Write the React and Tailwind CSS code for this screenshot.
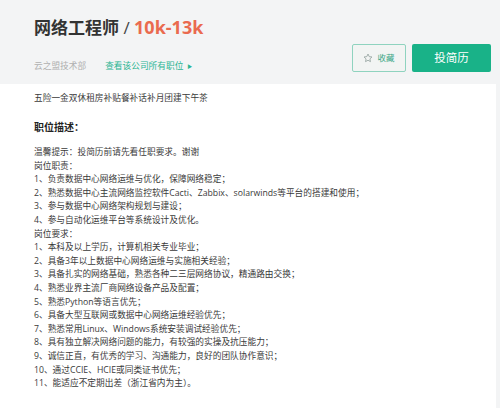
import React from 'react'

const font = { fontFamily: '"Open Sans", "Noto Sans CJK SC", sans-serif' }

const lines = [
  '温馨提示：投简历前请先看任职要求。谢谢',
  '岗位职责：',
  '1、负责数据中心网络运维与优化，保障网络稳定；',
  '2、熟悉数据中心主流网络监控软件Cacti、Zabbix、solarwinds等平台的搭建和使用；',
  '3、参与数据中心网络架构规划与建设；',
  '4、参与自动化运维平台等系统设计及优化。',
  '岗位要求：',
  '1、本科及以上学历，计算机相关专业毕业；',
  '2、具备3年以上数据中心网络运维与实施相关经验；',
  '3、具备扎实的网络基础，熟悉各种二三层网络协议，精通路由交换；',
  '4、熟悉业界主流厂商网络设备产品及配置；',
  '5、熟悉Python等语言优先；',
  '6、具备大型互联网或数据中心网络运维经验优先；',
  '7、熟悉常用Linux、Windows系统安装调试经验优先；',
  '8、具有独立解决网络问题的能力，有较强的实操及抗压能力；',
  '9、诚信正直，有优秀的学习、沟通能力，良好的团队协作意识；',
  '10、通过CCIE、HCIE或同类证书优先；',
  '11、能适应不定期出差（浙江省内为主）。',
]

function Star() {
  return (
    <svg width="10" height="10" viewBox="0 0 24 24" fill="none" stroke="#8a9a96" strokeWidth="1.8" strokeLinejoin="round">
      <path d="M12 2.5l2.9 6.2 6.6.8-4.9 4.6 1.3 6.6L12 17.4l-5.9 3.3 1.3-6.6-4.9-4.6 6.6-.8z" />
    </svg>
  )
}

export default function App() {
  return (
    <div className="w-[500px] h-[408px] overflow-hidden bg-[#f3f4f5]" style={font}>
      {/* header */}
      <div className="h-[84px] flex justify-between pl-[34px] pr-[9px]">
        <div className="pt-[15px]">
          <div className="text-[17px] leading-[24px] font-bold text-[#333]">
            网络工程师 <span className="font-normal text-[#444]">/</span>{' '}
            <span className="text-[18px] text-[#ea6a4f]">10k-13k</span>
          </div>
          <div className="mt-[19px] flex items-center text-[8.7px] leading-[14px]">
            <span className="text-[#b0b0b0]">云之盟技术部</span>
            <span className="ml-[19px] text-[#2bb593]">查看该公司所有职位</span>
            <span className="ml-[4px] text-[#2bb593] text-[5px]">▶</span>
          </div>
        </div>
        <div className="mt-[44px] flex gap-[6px]">
          <div className="w-[54px] h-[28px] border border-[#8fd3bf] rounded-[2px] bg-[#f2f4f3] flex items-center justify-center gap-[4px]">
            <Star />
            <span className="text-[8.5px] text-[#3aa686]">收藏</span>
          </div>
          <div className="w-[79px] h-[28px] rounded-[2px] bg-[#19b288] flex items-center justify-center text-white text-[11.5px]">
            投简历
          </div>
        </div>
      </div>
      {/* body */}
      <div className="mr-[4px] h-[324px] bg-white pl-[34px] pt-[7px] text-[#3a3a3a]">
        <div className="text-[8.7px] leading-[14px]">五险一金双休租房补贴餐补话补月团建下午茶</div>
        <div className="mt-[15px] text-[10px] leading-[14px] font-bold text-[#222]">职位描述：</div>
        <div className="mt-[12px] text-[8.7px] leading-[13.6px]">
          {lines.map((l) => (
            <div key={l}>{l}</div>
          ))}
        </div>
      </div>
    </div>
  )
}
